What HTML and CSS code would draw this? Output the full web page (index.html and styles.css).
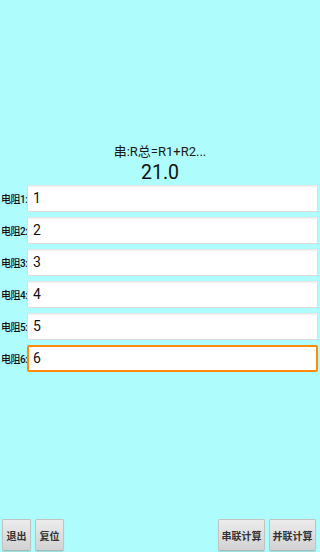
FILE: index.html
```html
<!DOCTYPE html>
<html lang="zh">
<head>
<meta charset="utf-8">
<title>电阻计算</title>
<link rel="stylesheet" href="styles.css">
</head>
<body>
<div class="app">
  <div class="main">
    <div class="formula">串:R总=R1+R2...</div>
    <div class="result">21.0</div>
    <div class="row"><span class="label">电阻1:</span><div class="field">1</div></div>
    <div class="row"><span class="label">电阻2:</span><div class="field">2</div></div>
    <div class="row"><span class="label">电阻3:</span><div class="field">3</div></div>
    <div class="row"><span class="label">电阻4:</span><div class="field">4</div></div>
    <div class="row"><span class="label">电阻5:</span><div class="field">5</div></div>
    <div class="row"><span class="label">电阻6:</span><div class="field focused">6</div></div>
  </div>
  <div class="bar">
    <div class="group">
      <button class="btn small">退出</button>
      <button class="btn small">复位</button>
    </div>
    <div class="group">
      <button class="btn wide">串联计算</button>
      <button class="btn wide">并联计算</button>
    </div>
  </div>
</div>
</body>
</html>
```
FILE: styles.css
```css
html, body {
  margin: 0;
  padding: 0;
}
body {
  background: #aefcfb;
  font-family: Roboto, "Noto Sans CJK SC", sans-serif;
  color: #111;
}
.app {
  width: 320px;
  height: 552px;
  display: flex;
  flex-direction: column;
  justify-content: space-between;
  box-sizing: border-box;
}
.main {
  padding-top: 143px;
  display: flex;
  flex-direction: column;
}
.formula {
  text-align: center;
  font-size: 13px;
  line-height: 18px;
  height: 18px;
  color: #1a1a1a;
}
.result {
  text-align: center;
  font-size: 19.5px;
  line-height: 24px;
  height: 24px;
  color: #111;
}
.row {
  display: flex;
  align-items: center;
  height: 27px;
  margin-bottom: 5px;
}
.label {
  width: 27px;
  padding-left: 1px;
  box-sizing: border-box;
  font-size: 10px;
  font-weight: 500;
  color: #111;
  white-space: nowrap;
  letter-spacing: -0.5px;
}
.field {
  flex: 1;
  margin-right: 2px;
  height: 27px;
  box-sizing: border-box;
  background: #fff;
  border: 1px solid #dcdcdc;
  border-top-color: #e6e6e6;
  box-shadow: inset 0 1px 1px rgba(0,0,0,0.06);
  padding-left: 5px;
  font-size: 14px;
  line-height: 25px;
  color: #111;
}
.field.focused {
  border: 2px solid #ff8a0c;
  border-radius: 2px;
  padding-left: 4px;
  line-height: 23px;
  box-shadow: none;
}
.bar {
  display: flex;
  justify-content: space-between;
  align-items: flex-end;
  padding: 0 4px 1px 2px;
}
.group {
  display: flex;
  gap: 4px;
}
.btn {
  height: 32px;
  box-sizing: border-box;
  padding: 0;
  margin: 0;
  border: 1px solid #c2c2c2;
  border-bottom-color: #a9b9b9;
  border-radius: 2px;
  background: linear-gradient(#ececec, #d2d2d2);
  box-shadow: 0 1px 1px rgba(0,0,0,0.12);
  font-family: "Noto Sans CJK SC", sans-serif;
  font-size: 10px;
  font-weight: bold;
  color: #333;
}
.btn.small {
  width: 29px;
}
.btn.wide {
  width: 47px;
}
```
